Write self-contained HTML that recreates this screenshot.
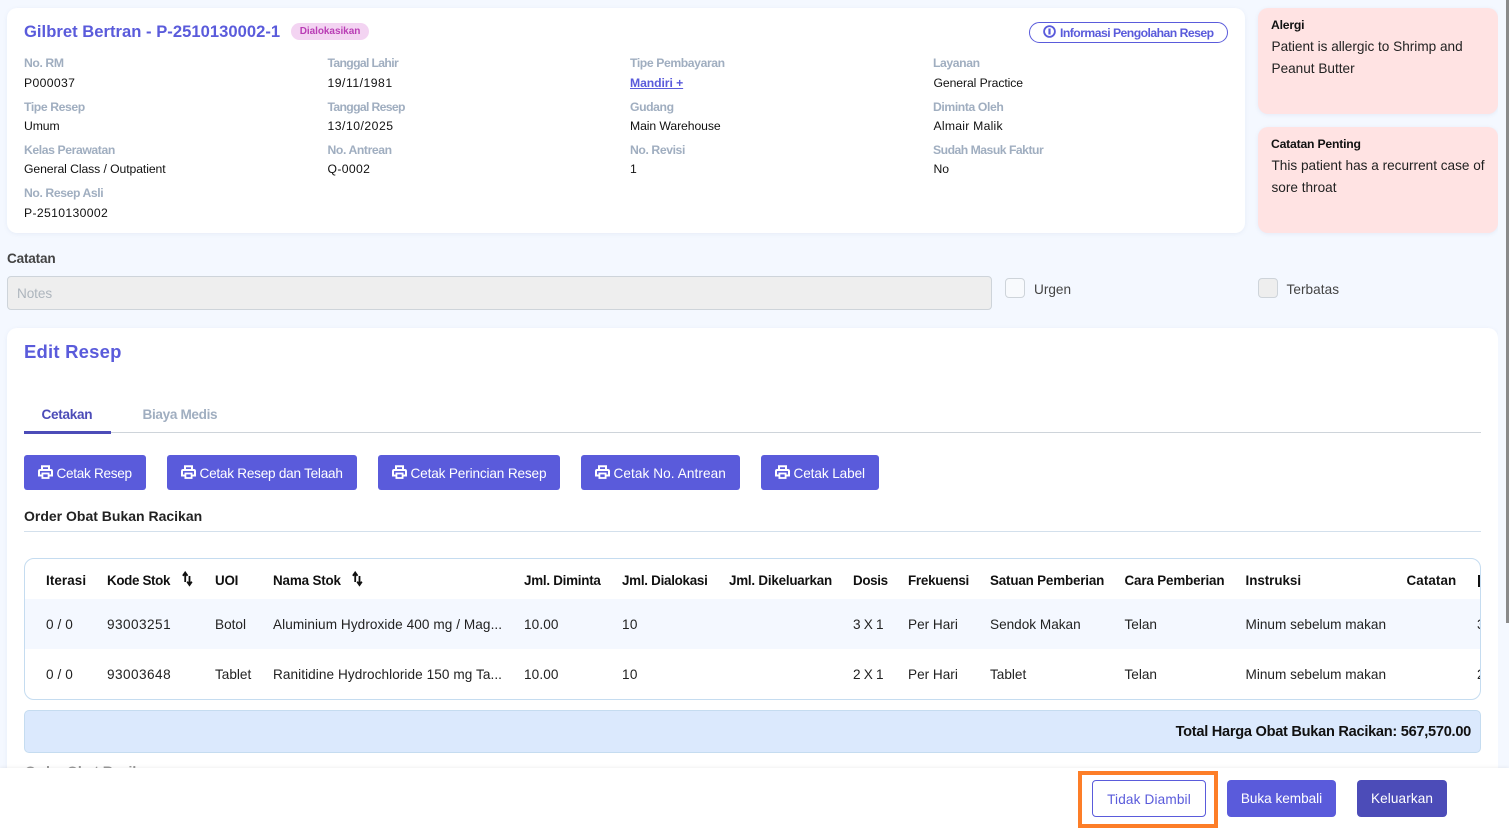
<!DOCTYPE html>
<html lang="id"><head><meta charset="utf-8"><title>Edit Resep</title>
<style>
html,body{margin:0;padding:0;width:1509px;height:828px;overflow:hidden;background:#f4f8ff;font-family:"Liberation Sans",sans-serif;color:#111}
.a{position:absolute;white-space:nowrap}
.card{position:absolute;background:#fff;border-radius:10px;box-shadow:0 1px 4px rgba(120,140,180,.1)}
.l{position:absolute;white-space:nowrap;font-size:12.2px;line-height:16px;font-weight:bold;color:#a0aec0;letter-spacing:-.4px}
.v{position:absolute;white-space:nowrap;font-size:12.2px;line-height:16px;color:#111;letter-spacing:-.08px}
.n{letter-spacing:.35px}
.d{letter-spacing:.5px}
.pink{position:absolute;left:1258px;width:240px;background:#ffe3e3;border-radius:10px;box-shadow:0 1px 4px rgba(120,140,180,.12)}
.pt{position:absolute;left:13px;font-size:12.2px;font-weight:bold;line-height:16px;color:#111;letter-spacing:-.2px;white-space:nowrap}
.pb{position:absolute;left:13.5px;font-size:13.6px;line-height:22px;color:#222;letter-spacing:0;white-space:nowrap}
.btn{position:absolute;top:455px;height:35px;background:#5a5bdb;border-radius:3px;color:#fff;font-size:13.6px;line-height:37px;letter-spacing:-.2px;white-space:nowrap}
.btn svg{position:absolute;left:14px;top:10px}
.btn span{position:absolute}
.th{position:absolute;top:573px;font-size:13.4px;line-height:16px;font-weight:bold;color:#111;white-space:nowrap;letter-spacing:-.2px}
.td{position:absolute;font-size:13.6px;line-height:16px;color:#222;white-space:nowrap;letter-spacing:0}
.dg{letter-spacing:.45px}
.r1{top:617px}.r2{top:667px}
</style></head><body>

<div class="card" style="left:7px;top:8px;width:1238px;height:225px"></div>
<div class="a" style="left:24px;top:21px;font-size:16.6px;line-height:21px;font-weight:bold;color:#5a5bdb;letter-spacing:.02px">Gilbret Bertran - P-2510130002-1</div>
<div class="a" style="left:291px;top:23px;width:78px;height:17px;border-radius:9px;background:#f3d4f2;color:#b93db5;font-size:10px;line-height:17px;text-align:center;font-weight:bold;letter-spacing:-.05px">Dialokasikan</div>

<div class="a" style="left:1029px;top:22px;width:197px;height:19px;border:1.3px solid #5a5bdb;border-radius:11px;background:#fff"></div>
<svg class="a" style="left:1043px;top:25px" width="13" height="13" viewBox="0 0 13 13"><circle cx="6.5" cy="6.5" r="5.4" fill="none" stroke="#5a5bdb" stroke-width="1.8"/><path d="M6.5 3.5v6" stroke="#5a5bdb" stroke-width="2.2"/></svg>
<div class="a" style="left:1060px;top:25px;font-size:12.2px;line-height:16px;font-weight:bold;color:#5a5bdb;letter-spacing:-.53px">Informasi Pengolahan Resep</div>

<div class="l" style="left:24px;top:55px">No. RM</div><div class="v n" style="left:24px;top:75px">P000037</div>
<div class="l" style="left:24px;top:99px">Tipe Resep</div><div class="v" style="left:24px;top:118px">Umum</div>
<div class="l" style="left:24px;top:142px">Kelas Perawatan</div><div class="v" style="left:24px;top:161px">General Class / Outpatient</div>
<div class="l" style="left:24px;top:185px">No. Resep Asli</div><div class="v n" style="left:24px;top:205px">P-2510130002</div>

<div class="l" style="left:327.5px;top:55px;letter-spacing:-.65px">Tanggal Lahir</div><div class="v d" style="left:327.5px;top:75px">19/11/1981</div>
<div class="l" style="left:327.5px;top:99px;letter-spacing:-.65px">Tanggal Resep</div><div class="v d" style="left:327.5px;top:118px">13/10/2025</div>
<div class="l" style="left:327.5px;top:142px">No. Antrean</div><div class="v n" style="left:327.5px;top:161px">Q-0002</div>

<div class="l" style="left:630px;top:55px">Tipe Pembayaran</div><div class="v" style="left:630px;top:75px;color:#5a5bdb;font-weight:bold;text-decoration:underline">Mandiri +</div>
<div class="l" style="left:630px;top:99px">Gudang</div><div class="v" style="left:630px;top:118px">Main Warehouse</div>
<div class="l" style="left:630px;top:142px">No. Revisi</div><div class="v" style="left:630px;top:161px">1</div>

<div class="l" style="left:933px;top:55px">Layanan</div><div class="v" style="left:933.5px;top:75px">General Practice</div>
<div class="l" style="left:933px;top:99px">Diminta Oleh</div><div class="v" style="left:933.5px;top:118px;letter-spacing:.25px">Almair Malik</div>
<div class="l" style="left:933px;top:142px;letter-spacing:-.5px">Sudah Masuk Faktur</div><div class="v" style="left:933.5px;top:161px">No</div>

<div class="pink" style="top:8px;height:106px"><div class="pt" style="top:9px">Alergi</div><div class="pb" style="top:28px">Patient is allergic to Shrimp and<br>Peanut Butter</div></div>
<div class="pink" style="top:127px;height:106px"><div class="pt" style="top:9px">Catatan Penting</div><div class="pb" style="top:28px">This patient has a recurrent case of<br>sore throat</div></div>

<div class="a" style="left:7px;top:251px;font-size:13.6px;line-height:16px;font-weight:bold;color:#444;letter-spacing:-.2px">Catatan</div>
<div class="a" style="left:7px;top:276px;width:983px;height:32px;background:#eee;border:1px solid #ced4da;border-radius:4px"></div>
<div class="a" style="left:17px;top:286px;font-size:13.6px;line-height:16px;color:#adb5bd;letter-spacing:-.1px">Notes</div>
<div class="a" style="left:1005px;top:278px;width:18px;height:18px;background:#f8fafd;border:1px solid #ced4da;border-radius:4px"></div>
<div class="a" style="left:1034px;top:282px;font-size:13.6px;line-height:16px;color:#444;letter-spacing:0">Urgen</div>
<div class="a" style="left:1258px;top:278px;width:18px;height:18px;background:#eee;border:1px solid #ced4da;border-radius:4px"></div>
<div class="a" style="left:1286.5px;top:282px;font-size:13.6px;line-height:16px;color:#444;letter-spacing:.05px">Terbatas</div>

<div class="card" style="left:7px;top:328px;width:1491px;height:500px"></div>
<div class="a" style="left:24px;top:340px;font-size:18.5px;line-height:24px;font-weight:bold;color:#5a5bdb;letter-spacing:.2px">Edit Resep</div>

<div class="a" style="left:24px;top:432px;width:1457px;height:1px;background:#ced4da"></div>
<div class="a" style="left:24px;top:431px;width:87px;height:3px;background:#4c4cb8"></div>
<div class="a" style="left:41.5px;top:407px;font-size:13.6px;line-height:16px;font-weight:bold;color:#4c4cb8;letter-spacing:-.3px">Cetakan</div>
<div class="a" style="left:142.5px;top:407px;font-size:13.6px;line-height:16px;font-weight:bold;color:#a0aec0;letter-spacing:-.35px">Biaya Medis</div>

<svg width="0" height="0" style="position:absolute"><defs><symbol id="pr" viewBox="0 0 15 14"><path d="M4 5V1.2h7V5" fill="none" stroke="#fff" stroke-width="2"/><path d="M3.6 10.5H1V6.2q0-1.2 1.2-1.2h10.6q1.2 0 1.2 1.2v4.3H11.4" fill="none" stroke="#fff" stroke-width="2"/><rect x="4.4" y="8.5" width="6.2" height="4.5" fill="none" stroke="#fff" stroke-width="1.8"/></symbol></defs></svg>

<div class="btn" style="left:24px;width:122px"><svg width="15" height="14"><use href="#pr"/></svg><span style="left:32.5px;letter-spacing:-.3px">Cetak Resep</span></div>
<div class="btn" style="left:167px;width:190px"><svg width="15" height="14"><use href="#pr"/></svg><span style="left:32.5px;letter-spacing:-.25px">Cetak Resep dan Telaah</span></div>
<div class="btn" style="left:378px;width:182px"><svg width="15" height="14"><use href="#pr"/></svg><span style="left:32.5px;letter-spacing:-.15px">Cetak Perincian Resep</span></div>
<div class="btn" style="left:581px;width:159px"><svg width="15" height="14"><use href="#pr"/></svg><span style="left:32.5px;letter-spacing:.08px">Cetak No. Antrean</span></div>
<div class="btn" style="left:761px;width:118px"><svg width="15" height="14"><use href="#pr"/></svg><span style="left:32.5px;letter-spacing:-.1px">Cetak Label</span></div>

<div class="a" style="left:24px;top:507px;font-size:14px;line-height:18px;font-weight:bold;color:#222;letter-spacing:0">Order Obat Bukan Racikan</div>
<div class="a" style="left:24px;top:531px;width:1457px;height:1px;background:#d3e0ec"></div>

<div class="a" style="left:24px;top:558px;width:1455px;height:140px;border:1px solid #c5dcf0;border-radius:10px;background:#fff"></div>
<div class="a" style="left:25px;top:599px;width:1455px;height:50px;background:#f4f8ff"></div>

<div class="th" style="left:46px;letter-spacing:.1px">Iterasi</div>
<div class="th" style="left:107px;letter-spacing:-.35px">Kode Stok</div>
<svg class="a" style="left:182px;top:571px" width="11" height="16" viewBox="0 0 11 16"><path d="M3.2 11V2.5M.9 4.8 3.2 1.5l2.3 3.3M7.5 5v8.500M5.200 10.700l2.300 3.300 2.300-3.300" fill="none" stroke="#111" stroke-width="1.800"/></svg>
<div class="th" style="left:215px">UOI</div>
<div class="th" style="left:273px;letter-spacing:-.15px">Nama Stok</div>
<svg class="a" style="left:352px;top:571px" width="11" height="16" viewBox="0 0 11 16"><path d="M3.2 11V2.5M.9 4.8 3.2 1.5l2.3 3.3M7.5 5v8.500M5.200 10.700l2.300 3.300 2.300-3.300" fill="none" stroke="#111" stroke-width="1.800"/></svg>
<div class="th" style="left:524px;letter-spacing:-.25px">Jml. Diminta</div>
<div class="th" style="left:622px;letter-spacing:-.27px">Jml. Dialokasi</div>
<div class="th" style="left:729px;letter-spacing:-.22px">Jml. Dikeluarkan</div>
<div class="th" style="left:853px;letter-spacing:-.35px">Dosis</div>
<div class="th" style="left:908px;letter-spacing:-.25px">Frekuensi</div>
<div class="th" style="left:990px;letter-spacing:-.17px">Satuan Pemberian</div>
<div class="th" style="left:1124.5px;letter-spacing:-.15px">Cara Pemberian</div>
<div class="th" style="left:1245.5px;letter-spacing:-.03px">Instruksi</div>
<div class="th" style="left:1406.5px;letter-spacing:.1px">Catatan</div>
<div class="a" style="left:1478px;top:575px;width:2px;height:12px;background:#111"></div>

<div class="td r1" style="left:46px;letter-spacing:.1px">0 / 0</div>
<div class="td r1 dg" style="left:107px">93003251</div>
<div class="td r1" style="left:215px">Botol</div>
<div class="td r1" style="left:273px;letter-spacing:.07px">Aluminium Hydroxide 400 mg / Mag...</div>
<div class="td r1" style="left:524px;letter-spacing:.1px">10.00</div>
<div class="td r1" style="left:622px;letter-spacing:.3px">10</div>
<div class="td r1" style="left:853px;letter-spacing:-.3px">3 X 1</div>
<div class="td r1" style="left:908px">Per Hari</div>
<div class="td r1" style="left:990px">Sendok Makan</div>
<div class="td r1" style="left:1124.5px">Telan</div>
<div class="td r1" style="left:1245.5px">Minum sebelum makan</div>
<div class="td r1" style="left:1477px;width:3px;overflow:hidden">3</div>

<div class="td r2" style="left:46px;letter-spacing:.1px">0 / 0</div>
<div class="td r2 dg" style="left:107px">93003648</div>
<div class="td r2" style="left:215px">Tablet</div>
<div class="td r2" style="left:273px;letter-spacing:.07px">Ranitidine Hydrochloride 150 mg Ta...</div>
<div class="td r2" style="left:524px;letter-spacing:.1px">10.00</div>
<div class="td r2" style="left:622px;letter-spacing:.3px">10</div>
<div class="td r2" style="left:853px;letter-spacing:-.3px">2 X 1</div>
<div class="td r2" style="left:908px">Per Hari</div>
<div class="td r2" style="left:990px">Tablet</div>
<div class="td r2" style="left:1124.5px">Telan</div>
<div class="td r2" style="left:1245.5px">Minum sebelum makan</div>
<div class="td r2" style="left:1477px;width:3px;overflow:hidden">2</div>

<div class="a" style="left:24px;top:710px;width:1455px;height:41px;background:#dbe9fd;border:1px solid #c5dcf0;border-radius:5px"></div>
<div class="a" style="right:38px;top:723px;font-size:14.6px;line-height:18px;font-weight:bold;color:#111;letter-spacing:-.28px">Total Harga Obat Bukan Racikan: 567,570.00</div>

<div class="a" style="left:25px;top:763px;font-size:14px;line-height:16px;font-weight:bold;color:#999">Order Obat Racikan</div>

<div class="a" style="left:1498px;top:0;width:11px;height:768px;background:#f4f8ff"></div>
<div class="a" style="left:1506px;top:0;width:3px;height:623px;background:#8a8a8a"></div>

<div class="a" style="left:0;top:768px;width:1509px;height:60px;background:#fff;box-shadow:0 -1px 3px rgba(0,0,0,.06)"></div>
<div class="a" style="left:1078px;top:771px;width:132px;height:49px;border:4.5px solid #fd7e28;background:#fff"></div>
<div class="a" style="left:1092px;top:780px;width:112px;height:35px;border:1.2px solid #5a5bdb;border-radius:4px;background:#fff;color:#5a5bdb;font-size:13.6px;line-height:37px;text-align:center;letter-spacing:.15px">Tidak Diambil</div>
<div class="a" style="left:1227px;top:780px;width:109px;height:37px;background:#5a5bdb;border-radius:4px;color:#fff;font-size:13.6px;line-height:37px;text-align:center;letter-spacing:-.02px">Buka kembali</div>
<div class="a" style="left:1357px;top:780px;width:90px;height:37px;background:#4c4cb8;border-radius:4px;color:#fff;font-size:13.6px;line-height:37px;text-align:center;letter-spacing:.1px">Keluarkan</div>

</body></html>
